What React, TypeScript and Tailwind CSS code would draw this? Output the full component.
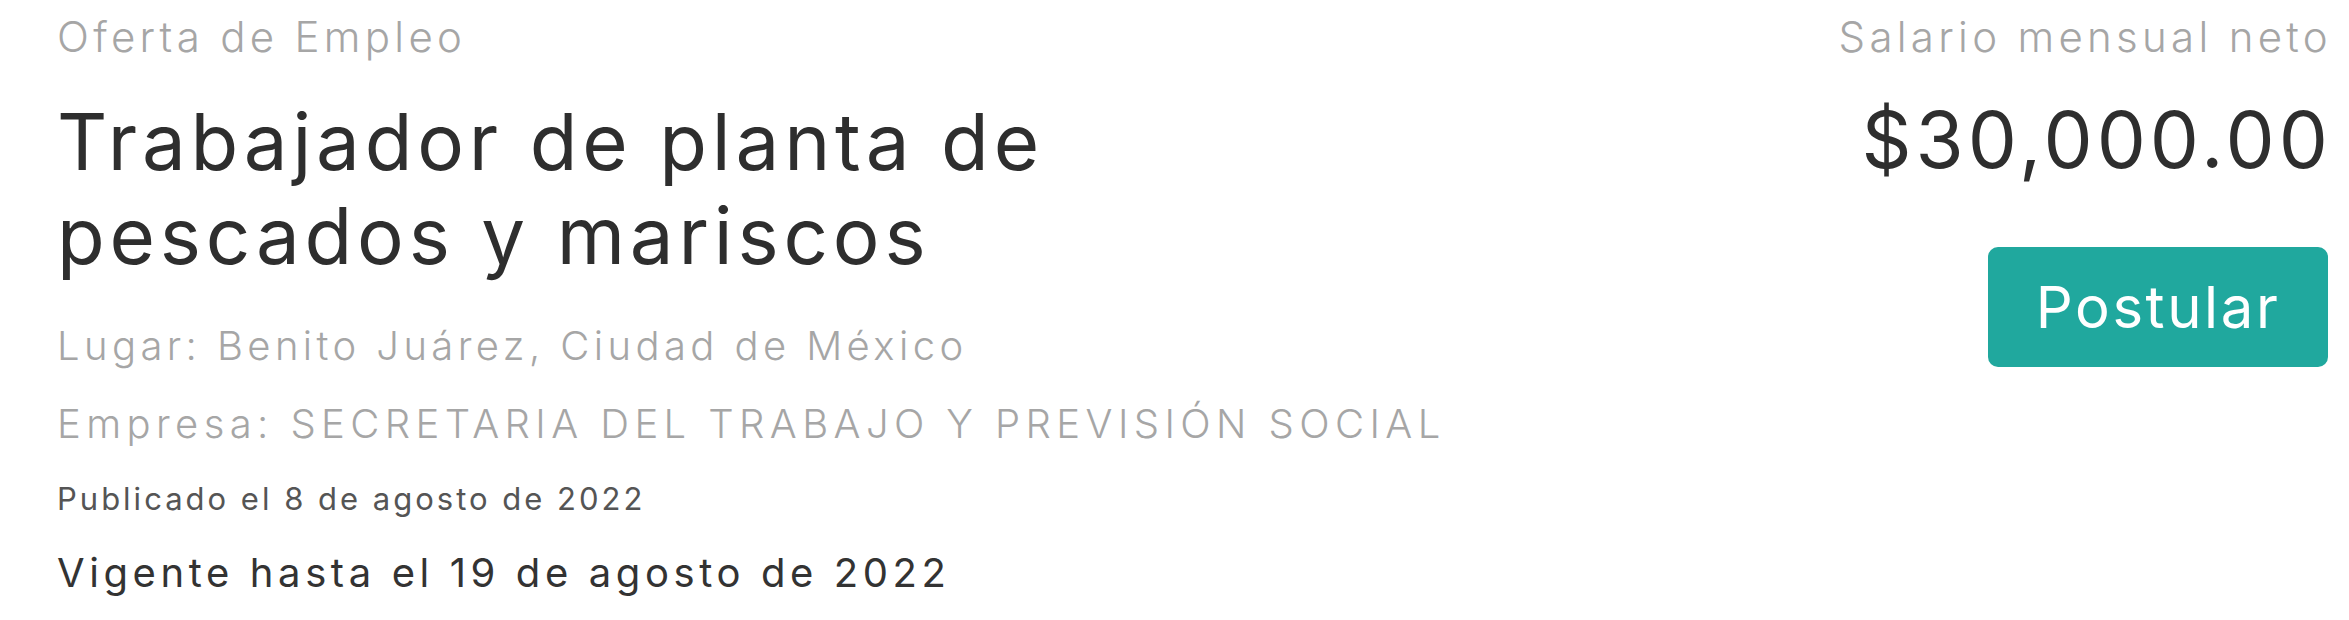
const font = { fontFamily: 'Inter, "Noto Sans", sans-serif' };

export default function App() {
  return (
    <div className="flex justify-between bg-white pl-[57px] pr-[21px] pt-[7px] w-[2349px] h-[620px]" style={font}>
      {/* Left: job details */}
      <div className="flex flex-col">
        <p className="text-[42px] leading-[60px] font-light tracking-[4.3px] text-[#a6a6a6]">Oferta de Empleo</p>
        <h1 className="mt-[28px] w-[1100px] text-[78px] leading-[94px] font-normal tracking-[4.8px] text-[#2e2e2e]">
          Trabajador de planta de pescados y mariscos
        </h1>
        <p className="mt-[24px] text-[40px] leading-[78px] font-light tracking-[4.4px] text-[#a6a6a6]">
          Lugar: Benito Juárez, Ciudad de México
        </p>
        <p className="text-[40px] leading-[78px] font-light tracking-[5.4px] text-[#a6a6a6]">
          Empresa: SECRETARIA DEL TRABAJO Y PREVISIÓN SOCIAL
        </p>
        <p className="text-[31px] leading-[72px] tracking-[3px] text-[#555555]">Publicado el 8 de agosto de 2022</p>
        <p className="text-[40px] leading-[76px] tracking-[4.6px] text-[#333333]">Vigente hasta el 19 de agosto de 2022</p>
      </div>

      {/* Right: salary + action */}
      <div className="flex flex-col items-end">
        <p className="mr-[-4px] text-[42px] leading-[60px] font-light tracking-[4.3px] text-[#a6a6a6]">Salario mensual neto</p>
        <p className="mr-[-4px] mt-[26px] text-[78px] leading-[94px] tracking-[4px] text-[#2e2e2e]">$30,000.00</p>
        <button className="mt-[60px] flex h-[120px] w-[340px] items-center justify-center rounded-[10px] bg-[#20a89e] text-[58px] tracking-[2.6px] text-white">
          Postular
        </button>
      </div>
    </div>
  );
}
